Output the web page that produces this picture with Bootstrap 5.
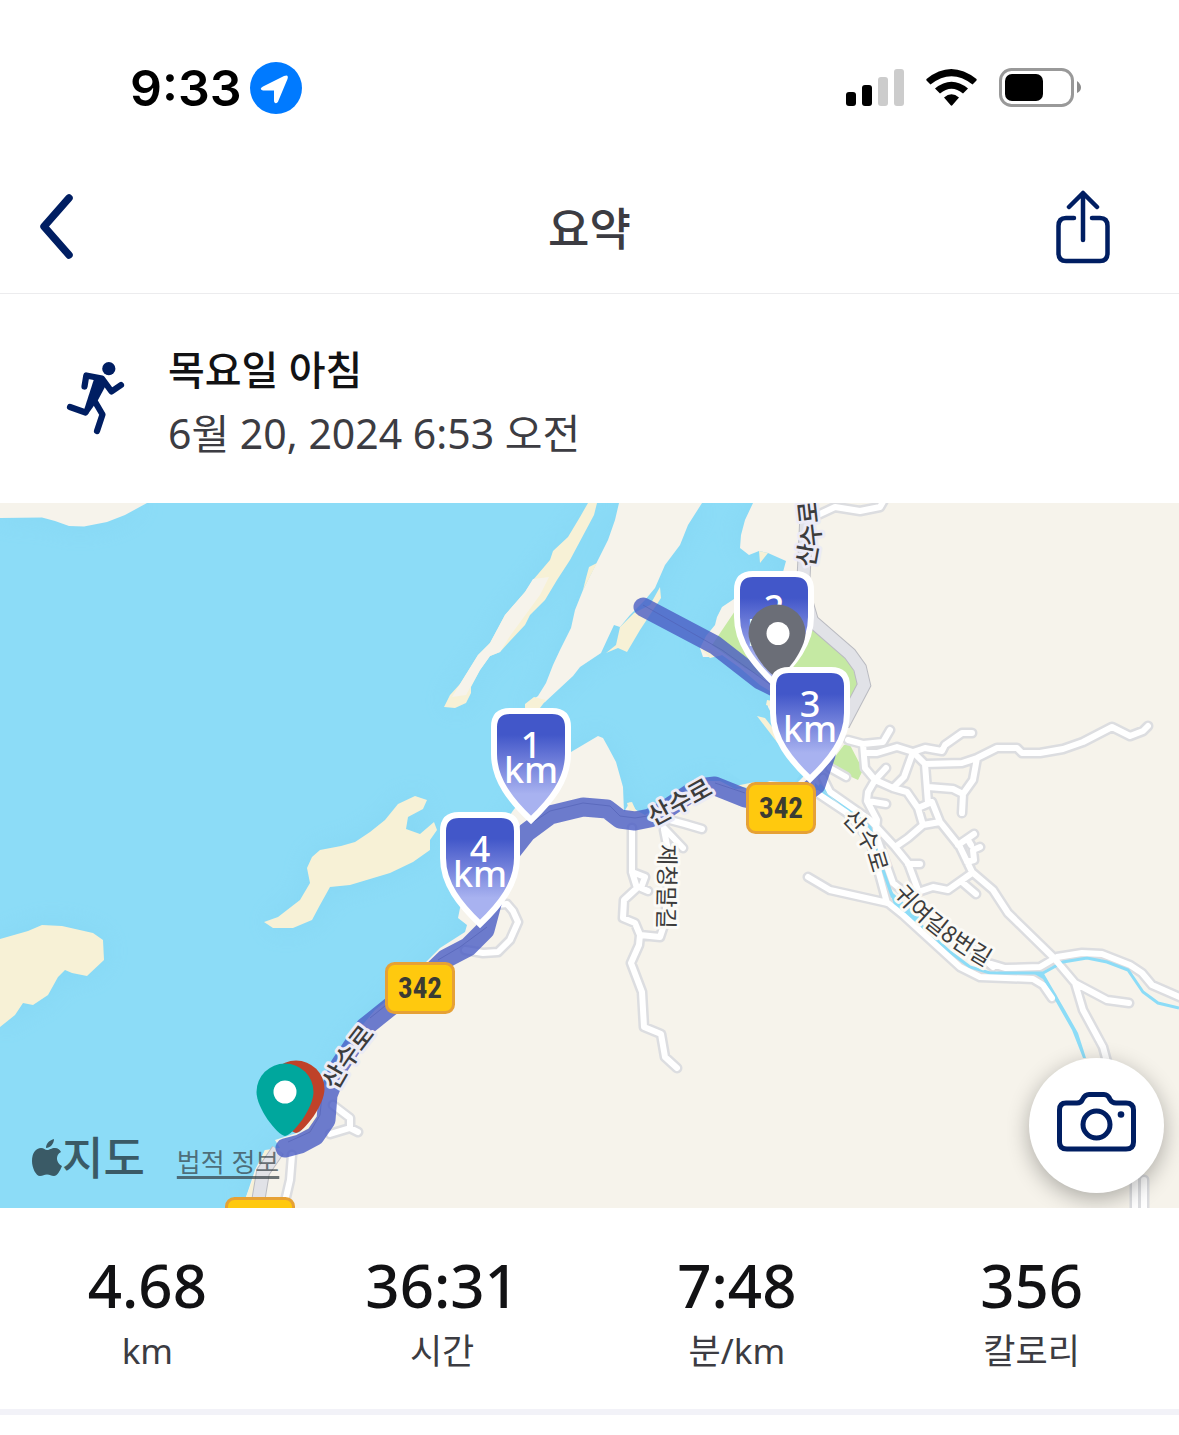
<!DOCTYPE html>
<html lang="ko">
<head>
<meta charset="utf-8">
<meta name="viewport" content="width=device-width, initial-scale=1">
<title>요약</title>
<link href="https://cdn.jsdelivr.net/npm/bootstrap@5.3.0/dist/css/bootstrap.min.css" rel="stylesheet">
<style>
  :root { --navy: #001e62; --ink: #121214; --soft: #3c3c42; }
  body { font-family: "Noto Sans", "Noto Sans CJK KR", sans-serif; color: var(--ink); background: #fff; }
  svg { display: block; }
  .status-bar { height: 158px; padding: 17px 98px 0 130px; }
  .clock { font: 600 50px/60px Inter, sans-serif; color: #000; }
  .title-bar { height: 136px; padding: 0 64px 0 32px; border-bottom: 1px solid #ececee; }
  .title-bar .btn { color: var(--navy); border: 0; }
  .screen-title { font-size: 45px; line-height: 60px; font-weight: 500; color: var(--soft); padding: 6px 0 0 32px; }
  .activity { padding: 43px 64px 37px; gap: 40px; }
  .activity h2 { font-size: 40px; line-height: 66px; font-weight: 500; }
  .activity p { font-size: 41px; line-height: 60px; color: var(--soft); padding-bottom: 3px; }
  .runner { margin-bottom: 8px; }
  .track-map { background: #8cdcf7; }
  .map-credit { left: 32px; bottom: 20px; gap: 32px; color: #3a5a66; }
  .map-brand { font-size: 45px; line-height: 60px; }
  .map-legal { font-size: 26px; line-height: 36px; padding-top: 8px; color: rgba(50, 60, 66, .7); text-underline-offset: 4px; text-decoration-thickness: 3px; }
  .btn-camera { right: 15px; bottom: 15px; width: 135px; height: 135px; background: #fff; color: var(--navy); box-shadow: 0 6px 22px rgba(0, 0, 0, .3); }
  .btn-camera:hover { background: #fff; color: var(--navy); }
  .btn-camera svg { margin-bottom: 8px; }
  .stats { padding: 41px 0 35px; border-bottom: 6px solid #f2f2f8; }
  .stat-value { font-size: 60px; line-height: 72px; font-weight: 500; }
  .stat-unit { font-size: 35px; line-height: 47px; color: var(--soft); padding-top: 6px; }
  .case { fill: none; stroke: #dcdde0; stroke-width: 11; stroke-linejoin: round; stroke-linecap: round; }
  .fill-road { fill: none; stroke: #fff; stroke-width: 6; stroke-linejoin: round; stroke-linecap: round; }
  .km-text { font-size: 36px; font-weight: 500; fill: #fff; text-anchor: middle; }
  .road-name { font-family: "Noto Sans CJK KR", sans-serif; font-size: 23px; fill: #3c3c3c; stroke: #fbfaf6; stroke-width: 6px; stroke-linejoin: round; paint-order: stroke; }
  .road-main { font-size: 25px; font-weight: 500; stroke: #ecebf6; }
  .route-no { font-family: "Liberation Sans Narrow", "Roboto Condensed", Roboto, sans-serif; font-weight: 700; font-size: 29px; fill: #3b3b33; text-anchor: middle; }
</style>
</head>
<body>
<header>
  <div class="status-bar d-flex justify-content-between align-items-center">
    <div class="d-flex align-items-center gap-2">
      <span class="clock">9:33</span>
      <svg width="52" height="52" viewBox="0 0 52 52" aria-hidden="true"><circle cx="26" cy="26" r="26" fill="#007aff"/><path d="M13 24.500 34 14Q39 12 37.500 17L28.500 38.500C27.500 42 24 42 24 38.500V28.500H13Q8.500 27 13 24.500Z" fill="#fff"/></svg>
    </div>
    <div class="d-flex align-items-center">
      <svg width="236" height="42" viewBox="845 67 236 42" aria-hidden="true">
        <rect x="846" y="92" width="10" height="14" rx="3"/><rect x="862" y="85" width="10" height="21" rx="3"/>
        <rect x="878" y="77" width="10" height="29" rx="3" fill="#ccc"/><rect x="894" y="69" width="10" height="37" rx="3" fill="#ccc"/>
        <path d="M926.500 79Q951 59 976.500 79Q977 80 976 81L972.500 84.500Q951.500 68 930.500 84.500L927 81Q926 80 926.500 79ZM935 88.500Q951.500 75 968 88.500L963 93.500Q951.500 84 940 93.500ZM944 97.500Q951.500 91 959 97.500L952.500 105Q951.500 106.500 950.500 105Z"/>
        <rect x="1000.500" y="69.500" width="72" height="36" rx="11" fill="none" stroke="#999" stroke-width="3"/>
        <rect x="1005" y="74" width="38" height="27" rx="7"/><path d="M1077 81Q1081 84 1081 87.500Q1081 91 1077 93Z" fill="#8c8c8c"/>
      </svg>
    </div>
  </div>
  <div class="title-bar row g-0 align-items-center">
    <div class="col d-flex">
      <button class="btn p-0" type="button" aria-label="뒤로">
        <svg width="50" height="70" viewBox="32 190 50 70"><path d="M69 197 44 225.500 69 254" fill="none" stroke="currentColor" stroke-width="7.500" stroke-linecap="round" stroke-linejoin="round"/></svg>
      </button>
    </div>
    <h1 class="screen-title col-auto m-0">요약</h1>
    <div class="col d-flex justify-content-end">
      <button class="btn p-0" type="button" aria-label="공유">
        <svg width="64" height="76" viewBox="1051 187 64 76"><path d="M1074 217H1066Q1058.500 217 1058.500 225V252Q1058.500 260 1066 260H1100Q1107.500 260 1107.500 252V225Q1107.500 217 1100 217H1092M1083 239V192M1069 206 1083 192 1097 206" fill="none" stroke="currentColor" stroke-width="4.500" stroke-linecap="round" stroke-linejoin="round"/></svg>
      </button>
    </div>
  </div>
</header>

<main>
  <section class="activity d-flex align-items-center">
    <svg class="runner" width="64" height="76" viewBox="64 360 64 76" aria-hidden="true" fill="none" stroke="#001e62" stroke-linecap="round" stroke-linejoin="round">
      <circle cx="108.800" cy="368.700" r="6.600" fill="#001e62" stroke="none"/>
      <path d="M84.500 386.500 86.300 375.500 102 378.500 111.500 391.500 121 385M70 407 85.500 412.500M94 400 102.500 414.500 97 431" stroke-width="6.200"/>
      <path d="M94 379 103 376 105.500 386 98 400 88 414 84 410Z" fill="#001e62" stroke="none"/>
    </svg>
    <div>
      <h2 class="m-0">목요일 아침</h2>
      <p class="m-0">6월 20, 2024 6:53 오전</p>
    </div>
  </section>

  <section class="track-map position-relative overflow-hidden">
    <svg class="w-100 h-auto" viewBox="0 503 1179 705" role="img" aria-label="달리기 경로 지도">
      <defs>
        <linearGradient id="kmFill" x1="0" y1="0" x2="0" y2="1"><stop offset=".22" stop-color="#4257c9"/><stop offset=".5" stop-color="#7684dc"/><stop offset=".76" stop-color="#a8b2f0"/></linearGradient>
        <filter id="shore" x="-20%" y="-20%" width="140%" height="140%"><feGaussianBlur stdDeviation="14"/></filter>
        <g id="kmPin"><path d="M-21 3H21Q37 3 37 19V46C37 72 20 93 0 112C-20 93-37 72-37 46V19Q-37 3-21 3Z" fill="url(#kmFill)" stroke="#fff" stroke-width="6"/></g>
        <g id="drop"><path d="M0 73C-8 72-28.500 45-28.500 29A28.500 28.500 0 0 1 28.500 29C28.500 45 8 72 0 73Z"/></g>
        <g id="routeBox"><rect x="-33.500" y="-24.500" width="67" height="49" rx="8" fill="#ffc90e" stroke="#e6a135" stroke-width="3"/></g>
        <path id="land" d="M753 503 745 520 741 535 740 548 749 555 759 551 768 553 786 561 783 572 740 595 722 607 717 617 715 625 706 636 700 648 703 657H712L722 655 740 668 760 685 780 697 767 702 768 707 785 740 805 775 797 783 770 781 750 788 735 789 720 781 700 781 665 803 645 815 636 810 630 802 627 807 624 812 623 787 616 762 608 747 603 738 598 736 571 752 540 775 512 812 490 850 460 908 458 918 467 925 465 932 440 948 425 963 400 990 375 1010 350 1040 335 1065 320 1095 312 1115 300 1132 275 1140 280 1148 265 1150 255 1170 246 1197 243 1208H1179V503Z"/>
        <path id="isles" d="M0 503H147L125 515 107 522 84 526.500 69 526 55 521 42 517.500 0 518ZM619 503 615 520 608 540 597 562 583 590 575 610 571 628 560 650 553 665 546 683 538 696 525 705 527 712 545 702 573 676 580 667 601 653 607 640 614 625 620 627 630 615 645 600 655 588 665 565 680 545 688 525 702 503Z"/>
        <path id="sands" d="M588 503H597L594 515 570 560 557 580 545 600 530 615 525 625 510 641 500 652 490 656 480 670 471 687 471 693 466 703 455 708 444 707 450 695 460 684 478 655 490 643 505 615 525 592 533 580 550 560 553 551 568 537 580 517ZM0 939 28 931 42 925 62 926 93 933 103 940 104 960 87 976 72 973 65 970 58 977 48 995 33 1005 23 1003 15 1015 0 1027ZM264 922 278 917 300 900 310 883 307 868 312 857 320 850 341 846 355 842 370 832 385 820 398 804 415 796 427 800 423 809 408 817 406 829 420 834 434 822 437 830 430 840V850L413 862 390 873 350 885 330 887 320 905 312 920 293 928H273ZM660 587 661 598 640 630 627 652 618 648 606 653 616 645 620 627 634 613 650 605Z"/>
        <path id="lanes" d="M848 740 863 744 883 742 890 730M863 744 865 768 875 780 893 788 907 792 918 808 923 825 908 838 895 847M867 753H877L897 747 913 752 925 764 962 763 977 758 997 748H1017L1022 753H1040L1063 749 1083 742 1112 727 1130 736 1143 731 1148 726M913 752 925 748 942 751 945 745 962 733H972M913 752 904 777 893 788M925 764 928 803 932 802 940 822 960 847 972 872 993 890 1008 913 1053 957 1075 983 1083 1010 1103 1047 1112 1080 1135 1150 1135 1212M928 787 953 789 963 794 962 813M963 794 973 780 977 758M932 802 918 808M923 825 940 822M875 780 886 768M875 780 868 792 867 801 877 820 876 830M868 801 886 804M830 768 846 777M817 793 847 813 870 840 887 903M823 778 830 792 870 820 895 847 908 863 918 890M877 838 893 883 920 905 993 967M908 864H920M918 892 933 887 948 890 972 873M962 882 976 894M958 845 974 834M968 840 971 845M980 847 973 850 974 860 967 862M808 877 830 890 888 903 903 915 960 967 980 977 1033 979 1043 985 1052 998M985 962 1005 968 1040 967 1057 957 1082 953 1102 954 1130 965 1142 973 1152 985 1182 998M1075 983 1107 1000 1129 1003M632 828V872L637 888 624 900 623 918 635 923 640 935 639 945 631 963 642 992 644 1027 661 1034 665 1057 677 1068M632 872 645 877 641 888 648 891M640 935 660 937 665 922 670 860 664 830M664 828 683 848M670 820 685 824 702 829M333 1105 350 1118V1128L358 1132M350 1128 330 1134M292 1155 290 1180 283 1210M820 514 835 507 860 511 880 507 884 500M1144 1180 1144 1212"/>
        <path id="loop" d="M496 905 507 904 513 911 518 922 510 940 498 952 483 953 465 950"/>
      </defs>
      <g fill="#79cdee" opacity=".35" filter="url(#shore)"><use href="#land"/><use href="#isles"/><use href="#sands"/></g>
      <use href="#sands" fill="#f7f1d6"/>
      <use href="#land" fill="#f6f3eb"/><use href="#isles" fill="#f6f3eb"/>
      <path d="M533 579 549 577 540 595 510 636 500 652 490 656 480 670 466 695 452 697 478 655 490 643 505 615 525 592Z" fill="#f6f3eb"/>
      <path d="M597 563 589 567 586 578 583 590ZM534 697 546 700 540 708H525V704ZM759 551 768 553 760 563ZM700 648 715 650 722 655 710 658ZM767 700 778 702 780 709 766 705ZM757 716 765 718 790 750 783 750ZM627 803 632 802 637 813H630ZM735 786 755 782 748 788ZM265 1150 274 1150 255 1190 245 1208 246 1197ZM303 1132 322 1108 310 1135Z" fill="#f7f1d6"/>
      <path d="M773 740 795 754 803 770 795 782 770 781 740 780 725 770Z" fill="#8cdcf7"/>
      <path d="M735 611 712 645 745 668 790 692 848 710 858 682 849 659 812 628 780 610ZM844 745H850L863 770 858 780 828 766Z" fill="#c5e9a3"/>
      <path d="M807 503 803 590 812 621 850 654 860 668 864 685 843 725" fill="none" stroke="#babbc1" stroke-width="14"/>
      <path d="M807 503 803 590 812 621 850 654 860 668 864 685 843 725" fill="none" stroke="#e1e2e7" stroke-width="12"/>
      <path d="M278 1150 263 1172 257 1208" fill="none" stroke="#babbc1" stroke-width="14"/><path d="M278 1150 263 1172 257 1208" fill="none" stroke="#e1e2e7" stroke-width="12"/>
      <use href="#lanes" class="case"/>
      <path d="M819 785 847 808 870 827 882 867 892 896 903 910 923 927 950 952 970 967 990 973H1043L1063 962 1087 958 1107 962 1128 970 1143 992 1158 1003 1179 1008" fill="none" stroke="#8cdcf7" stroke-width="3"/>
      <path d="M815 783 848 813 844 813 815 792ZM882 867 893 893 923 920 923 930 895 908ZM1033 973 1043 972 1065 1010 1078 1033 1086 1058 1083 1058 1072 1030 1043 979Z" fill="#8cdcf7"/>
      <use href="#lanes" class="fill-road"/>
      <use href="#loop" class="case"/><use href="#loop" class="fill-road"/>
      <path d="M643 607 715 645 760 680 800 700 826 755 816 785 790 805 765 802 745 798 715 786 698 788 665 810 650 818 635 821 620 819 607 809 583 807 550 815 527 832 505 860 493 900 485 930 468 947 445 959 420 983 395 1003 365 1027 340 1065 328 1095 326 1120 315 1136 300 1144 285 1148" fill="none" stroke="#4a5cc4" stroke-width="19" stroke-opacity=".8" stroke-linejoin="round" stroke-linecap="round"/>
      <path d="M643 605 722 650 778 690M745 793 715 783M660 814 635 818 620 816 610 806 583 803 550 811 530 824M487 927 460 947 438 960M395 998 370 1018M322 1095 320 1115 310 1132 288 1142" fill="none" stroke="#4e5cb0" stroke-opacity=".55" stroke-width="1"/>

      <path id="nameTop" d="M814 568 820 535 815 490" fill="none"/><path id="nameMid" d="M654 826Q683 811 720 790" fill="none"/><path id="nameLow" d="M337 1091Q350 1065 378 1031" fill="none"/>
      <path id="nameEast" d="M841 820Q863 837 871 869L876 900" fill="none"/><path id="nameSouth" d="M893 894Q930 938 1000 975" fill="none"/>
      <text class="road-name road-main"><textPath href="#nameTop">산수로</textPath></text>
      <text class="road-name road-main"><textPath href="#nameMid">산수로</textPath></text>
      <text class="road-name road-main"><textPath href="#nameLow">산수로</textPath></text>
      <text class="road-name"><textPath href="#nameEast">산수로</textPath></text>
      <text class="road-name"><textPath href="#nameSouth">귀여길8번길</textPath></text>
      <text class="road-name" transform="translate(659 844) rotate(91)">제청말길</text>

      <use href="#routeBox" x="781" y="808"/><text class="route-no" x="781" y="818">342</text>
      <use href="#routeBox" x="420" y="988"/><text class="route-no" x="420" y="998">342</text>
      <use href="#routeBox" x="260" y="1223"/>
      <use href="#kmPin" x="531" y="708"/><text class="km-text"><tspan x="531" y="758">1</tspan><tspan x="531" y="783">km</tspan></text>
      <use href="#kmPin" x="480" y="812"/><text class="km-text"><tspan x="480" y="862">4</tspan><tspan x="480" y="887">km</tspan></text>
      <use href="#kmPin" x="774" y="571"/><text class="km-text"><tspan x="774" y="621">2</tspan><tspan x="774" y="646">km</tspan></text>
      <use href="#drop" x="777" y="604" fill="#6b6e77"/><circle cx="778" cy="633.500" r="11.500" fill="#fff"/>
      <use href="#kmPin" x="810" y="667"/><text class="km-text"><tspan x="810" y="717">3</tspan><tspan x="810" y="742">km</tspan></text>
      <use href="#drop" x="296" y="1060" fill="#bf4229"/>
      <use href="#drop" x="285" y="1063" fill="#00a79d"/><circle cx="285" cy="1092" r="11.500" fill="#fff"/>
    </svg>

    <div class="map-credit position-absolute d-flex align-items-center">
      <div class="d-flex align-items-center map-brand">
        <svg width="30" height="38" viewBox="0 0 30 38" fill="currentColor" aria-hidden="true"><path d="M22 0C22 5 18 9 14 9C14 4 18 1 22 0ZM15 11C18 11 19 9 23 9C26 9 28 11 29 13C23 16 24 24 30 27C28 32 25 37 22 37C19 37 18 35.500 15 35.500C12 35.500 11 37 8 37C4 37 0 29 0 22C0 14 4 9 9 9C12 9 13 11 15 11Z"/></svg>
        <span class="fw-medium" style="font-weight:500">지도</span>
      </div>
      <a class="map-legal" href="#legal">법적 정보</a>
    </div>
    <button class="btn btn-camera rounded-circle position-absolute d-flex align-items-center justify-content-center p-0" type="button" aria-label="사진 추가">
      <svg width="80" height="62" viewBox="1057 1091 80 62" fill="none" stroke="currentColor" stroke-width="5" stroke-linejoin="round"><path d="M1066 1103H1077Q1081 1103 1082.500 1099.500Q1085 1094.500 1089 1094.500H1104Q1108 1094.500 1110 1099.500Q1112 1103 1116 1103H1126Q1133.500 1103 1133.500 1110V1142Q1133.500 1149 1126 1149H1067Q1059.500 1149 1059.500 1142V1110Q1059.500 1103 1066 1103Z"/><circle cx="1096.500" cy="1124.500" r="13.500"/><circle cx="1121" cy="1114.500" r="3.300" fill="currentColor" stroke="none"/></svg>
    </button>
  </section>

  <section class="stats">
    <div class="row g-0 text-center">
      <div class="col-3"><div class="stat-value">4.68</div><div class="stat-unit">km</div></div>
      <div class="col-3"><div class="stat-value">36:31</div><div class="stat-unit">시간</div></div>
      <div class="col-3"><div class="stat-value">7:48</div><div class="stat-unit">분/km</div></div>
      <div class="col-3"><div class="stat-value">356</div><div class="stat-unit">칼로리</div></div>
    </div>
  </section>
</main>
<script src="https://cdn.jsdelivr.net/npm/bootstrap@5.3.0/dist/js/bootstrap.bundle.min.js"></script>
</body>
</html>
